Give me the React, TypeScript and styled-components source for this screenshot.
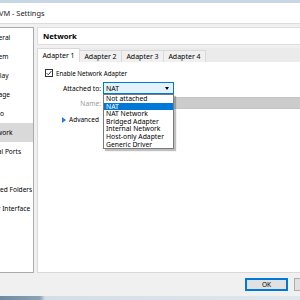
import React from "react";
import styled, { createGlobalStyle } from "styled-components";

const Global = createGlobalStyle`
  html, body { margin: 0; padding: 0; width: 300px; height: 300px; overflow: hidden; background: #f0f0f0; }
  #root { width: 300px; height: 300px; }
  * { box-sizing: border-box; }
`;

const Screen = styled.div`
  width: 300px;
  height: 300px;
  overflow: hidden;
  display: flex;
  flex-direction: column;
  font-family: "Noto Sans", "Segoe UI", sans-serif;
  font-size: 7px;
  color: #000;
`;

const Win = styled.div`
  margin-left: -40px;
  width: 380px;
  height: 296px;
  flex: none;
  display: flex;
  flex-direction: column;
  background: #f0f0f0;
`;

const TopStrip = styled.div`
  height: 3px;
  background: #c8d7e3;
`;

const TitleBar = styled.div`
  height: 21px;
  background: #fff;
  border-bottom: 1px solid #dcdcdc;
  display: flex;
  align-items: center;
  padding-left: 39px;
  font-size: 7.4px;
  color: #222;
`;

const ContentRow = styled.div`
  height: 249px;
  padding-top: 3px;
  display: flex;
  gap: 3px;
`;

const Sidebar = styled.div`
  width: 74px;
  background: #fff;
  border: 1px solid #ababab;
  display: flex;
  flex-direction: column;
`;

const SideItem = styled.div<{ $active?: boolean }>`
  height: 19px;
  flex: none;
  display: flex;
  align-items: center;
  padding-left: 25px;
  font-size: 6.6px;
  white-space: nowrap;
  background: ${(p) => (p.$active ? "#d9d9d9" : "transparent")};
`;

const Main = styled.div`
  flex: 1;
  display: flex;
  flex-direction: column;
`;

const Header = styled.div`
  height: 18px;
  background: #fff;
  border: 1px solid #dedede;
  display: flex;
  align-items: center;
  padding-left: 5px;
  font-weight: bold;
  font-size: 7.7px;
`;

const TabBar = styled.div`
  margin-top: 3px;
  height: 14px;
  display: flex;
  align-items: flex-end;
  background: #ebebeb;
`;

const Tab = styled.div<{ $active?: boolean }>`
  width: 43px;
  height: ${(p) => (p.$active ? "14px" : "12px")};
  display: flex;
  align-items: center;
  justify-content: center;
  font-size: 7px;
  white-space: nowrap;
  background: ${(p) => (p.$active ? "#fff" : "#f0f0f0")};
  border: 1px solid #d9d9d9;
  border-bottom: none;
  margin-left: ${(p) => (p.$active ? "0" : "-1px")};
`;

const Pane = styled.div`
  flex: 1;
  background: #fff;
  border: 1px solid #d9d9d9;
  border-top: none;
  padding: 7px 0 0 7px;
  display: flex;
  flex-direction: column;
`;

const CheckRow = styled.div`
  display: flex;
  align-items: center;
  gap: 3px;
  height: 8px;
  font-size: 6.2px;
  white-space: nowrap;
`;

const CheckBox = styled.div`
  width: 8px;
  height: 8px;
  border: 1px solid #333;
  background: #fff;
  display: flex;
  align-items: center;
  justify-content: center;
`;

const Form = styled.div`
  margin-top: 5px;
  display: grid;
  grid-template-columns: 56px 1fr;
  column-gap: 2px;
  row-gap: 3px;
  align-items: center;
`;

const Label = styled.div<{ $disabled?: boolean }>`
  text-align: right;
  white-space: nowrap;
  font-size: 6.7px;
  color: ${(p) => (p.$disabled ? "#9a9a9a" : "#000")};
`;

const ComboWrap = styled.div`
  position: relative;
  width: 71px;
  height: 12px;
`;

const Combo = styled.div`
  height: 12px;
  border: 1px solid #0078d7;
  background: #e5f1fb;
  display: flex;
  align-items: center;
  justify-content: space-between;
  padding: 0 4px 0 2px;
`;

const Arrow = styled.div`
  width: 0;
  height: 0;
  border-left: 2.5px solid transparent;
  border-right: 2.5px solid transparent;
  border-top: 3px solid #000;
`;

const DropList = styled.div`
  position: absolute;
  top: 12px;
  left: 0;
  width: 71px;
  background: #fff;
  border: 1px solid #7a7a7a;
  box-shadow: 2px 2px 1px rgba(0, 0, 0, 0.25);
  z-index: 5;
`;

const DropItem = styled.div<{ $sel?: boolean }>`
  height: 7.6px;
  line-height: 7.6px;
  padding-left: 2px;
  font-size: 6.8px;
  white-space: nowrap;
  background: ${(p) => (p.$sel ? "#0078d7" : "transparent")};
  color: ${(p) => (p.$sel ? "#fff" : "#000")};
`;

const NameField = styled.div`
  height: 12px;
  background: #cccccc;
  border: 1px solid #c4c4c4;
`;

const AdvancedRow = styled.div`
  margin-top: 6px;
  margin-left: 17px;
  display: flex;
  align-items: center;
  gap: 3px;
  font-size: 6.5px;
  white-space: nowrap;
`;

const Tri = styled.div`
  width: 0;
  height: 0;
  border-top: 3px solid transparent;
  border-bottom: 3px solid transparent;
  border-left: 4px solid #2b7bd0;
`;

const ButtonBar = styled.div`
  height: 23px;
  display: flex;
  justify-content: flex-end;
  gap: 6px;
  padding: 5px 3px 0 0;
`;

const Button = styled.div<{ $primary?: boolean }>`
  width: 43px;
  height: 13px;
  background: #e1e1e1;
  border: ${(p) => (p.$primary ? "2px solid #0078d7" : "1px solid #adadad")};
  display: flex;
  align-items: center;
  justify-content: center;
  font-size: 6.5px;
`;

const BottomStrip = styled.div`
  height: 4px;
  background: linear-gradient(to right, #6d8ba3 0, #8aa3b6 40px, #d4dee6 45px, #dfe7ee 300px);
`;

const sideItems = [
  "General",
  "System",
  "Display",
  "Storage",
  "Audio",
  "Network",
  "Serial Ports",
  "USB",
  "Shared Folders",
  "User Interface",
];

const options = [
  "Not attached",
  "NAT",
  "NAT Network",
  "Bridged Adapter",
  "Internal Network",
  "Host-only Adapter",
  "Generic Driver",
];

export default function App() {
  return (
    <>
      <Global />
      <Screen>
        <Win>
          <TopStrip />
          <TitleBar>VM - Settings</TitleBar>
          <ContentRow>
            <Sidebar>
              {sideItems.map((s) => (
                <SideItem key={s} $active={s === "Network"}>
                  {s}
                </SideItem>
              ))}
            </Sidebar>
            <Main>
              <Header>Network</Header>
              <TabBar>
                <Tab $active>Adapter 1</Tab>
                <Tab>Adapter 2</Tab>
                <Tab>Adapter 3</Tab>
                <Tab>Adapter 4</Tab>
              </TabBar>
              <Pane>
                <CheckRow>
                  <CheckBox>
                    <svg width="6" height="6" viewBox="0 0 6 6">
                      <path d="M0.6 3.1 L2.3 4.8 L5.4 1.1" fill="none" stroke="#222" strokeWidth="0.9" />
                    </svg>
                  </CheckBox>
                  Enable Network Adapter
                </CheckRow>
                <Form>
                  <Label>Attached to:</Label>
                  <ComboWrap>
                    <Combo>
                      <span>NAT</span>
                      <Arrow />
                    </Combo>
                    <DropList>
                      {options.map((o) => (
                        <DropItem key={o} $sel={o === "NAT"}>
                          {o}
                        </DropItem>
                      ))}
                    </DropList>
                  </ComboWrap>
                  <Label $disabled>Name:</Label>
                  <NameField />
                </Form>
                <AdvancedRow>
                  <Tri />
                  Advanced
                </AdvancedRow>
              </Pane>
            </Main>
          </ContentRow>
          <ButtonBar>
            <Button $primary>OK</Button>
            <Button>Cancel</Button>
          </ButtonBar>
        </Win>
        <BottomStrip />
      </Screen>
    </>
  );
}
